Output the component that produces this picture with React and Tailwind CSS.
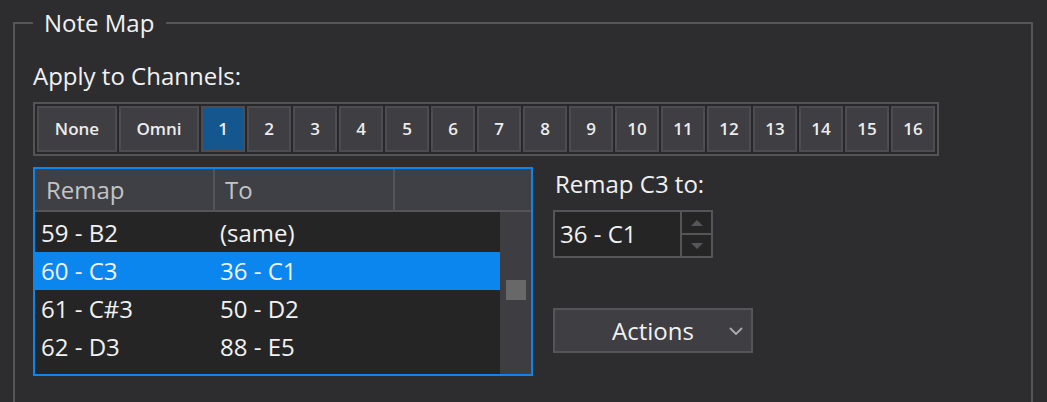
import React from 'react';

const channels = Array.from({ length: 16 }, (_, i) => String(i + 1));

const rows = [
  { from: '59 - B2', to: '(same)' },
  { from: '60 - C3', to: '36 - C1', selected: true },
  { from: '61 - C#3', to: '50 - D2' },
  { from: '62 - D3', to: '88 - E5' },
];

// Single toggle in the channel strip
const ChannelButton = ({ label, wide, active }) => (
  <button
    className={`h-[46px] ${wide ? 'w-[80px]' : 'w-[44px]'} border-2 border-[#4d4d51] ${
      active ? 'bg-[#14578f]' : 'bg-[#3e3e43]'
    } text-[17px] font-semibold text-[#ececec] flex items-center justify-center`}
  >
    {label}
  </button>
);

const App = () => (
  <div
    className="w-[1047px] h-[402px] overflow-hidden bg-[#2d2d30] text-[#f1f1f1] pt-[8px] pl-[13px]"
    style={{ fontFamily: '"Open Sans", "Noto Sans", sans-serif' }}
  >
    <fieldset className="w-[1020px] h-[430px] border-2 border-[#555558] pl-[18px]">
      <legend className="ml-0 pl-[11px] pr-[12px] text-[24px] leading-[30px] text-[#f1f1f1]">Note Map</legend>

      {/* Channel selector */}
      <div className="mt-[23px] text-[24px] leading-[30px]">Apply to Channels:</div>
      <div className="mt-[11px] inline-flex gap-[2px] p-[2px] border-2 border-[#545457] bg-[#28282b]">
        <ChannelButton label="None" wide />
        <ChannelButton label="Omni" wide />
        {channels.map((c) => (
          <ChannelButton key={c} label={c} active={c === '1'} />
        ))}
      </div>

      <div className="mt-[11px] flex gap-[20px]">
        {/* Remap table */}
        <div className="w-[500px] h-[209px] border-2 border-[#0a86ee] flex flex-col bg-[#252526]">
          <div className="h-[43px] flex bg-[#3f3f46] border-b-2 border-[#555558] text-[24px] text-[#c4c4c4]">
            <div className="w-[180px] flex items-center pl-[11px] border-r-2 border-[#555558]">Remap</div>
            <div className="w-[180px] flex items-center pl-[10px] border-r-2 border-[#555558]">To</div>
            <div className="flex-1" />
          </div>
          <div className="flex-1 flex">
            <div className="flex-1 pt-[2px]">
              {rows.map((r) => (
                <div
                  key={r.from}
                  className={`h-[38px] flex items-center text-[24px] ${r.selected ? 'bg-[#0a86ee]' : ''}`}
                >
                  <div className="w-[180px] pl-[6px]">{r.from}</div>
                  <div className="pl-[5px]">{r.to}</div>
                </div>
              ))}
            </div>
            <div className="w-[31px] bg-[#3e3e42] pt-[68px] flex justify-center">
              <div className="w-[20px] h-[20px] bg-[#686868]" />
            </div>
          </div>
        </div>

        {/* Right side controls */}
        <div className="flex flex-col items-start">
          <div className="mt-[2px] pl-[2px] text-[24px] leading-[30px]">Remap C3 to:</div>
          <div className="mt-[11px] w-[160px] h-[48px] border-2 border-[#555558] bg-[#252526] flex">
            <div className="flex-1 flex items-center pl-[5px] text-[24px]">36 - C1</div>
            <div className="w-[31px] border-l-2 border-[#555558] flex flex-col">
              <div className="flex-1 flex items-center justify-center border-b-2 border-[#555558]">
                <svg width="12" height="6" viewBox="0 0 12 6">
                  <polygon points="0,6 12,6 6,0" fill="#56565a" />
                </svg>
              </div>
              <div className="flex-1 flex items-center justify-center">
                <svg width="12" height="6" viewBox="0 0 12 6">
                  <polygon points="0,0 12,0 6,6" fill="#56565a" />
                </svg>
              </div>
            </div>
          </div>
          <button className="mt-[50px] w-[200px] h-[45px] border-2 border-[#555558] bg-[#3e3e43] flex items-center text-[24px] text-[#f1f1f1]">
            <span className="flex-1 text-center pl-[22px]">Actions</span>
            <svg width="14" height="8" viewBox="0 0 14 8" className="mr-[8px]">
              <polyline points="1,1 7,7 13,1" fill="none" stroke="#a8a8a8" strokeWidth="2" />
            </svg>
          </button>
        </div>
      </div>
    </fieldset>
  </div>
);

export default App;
